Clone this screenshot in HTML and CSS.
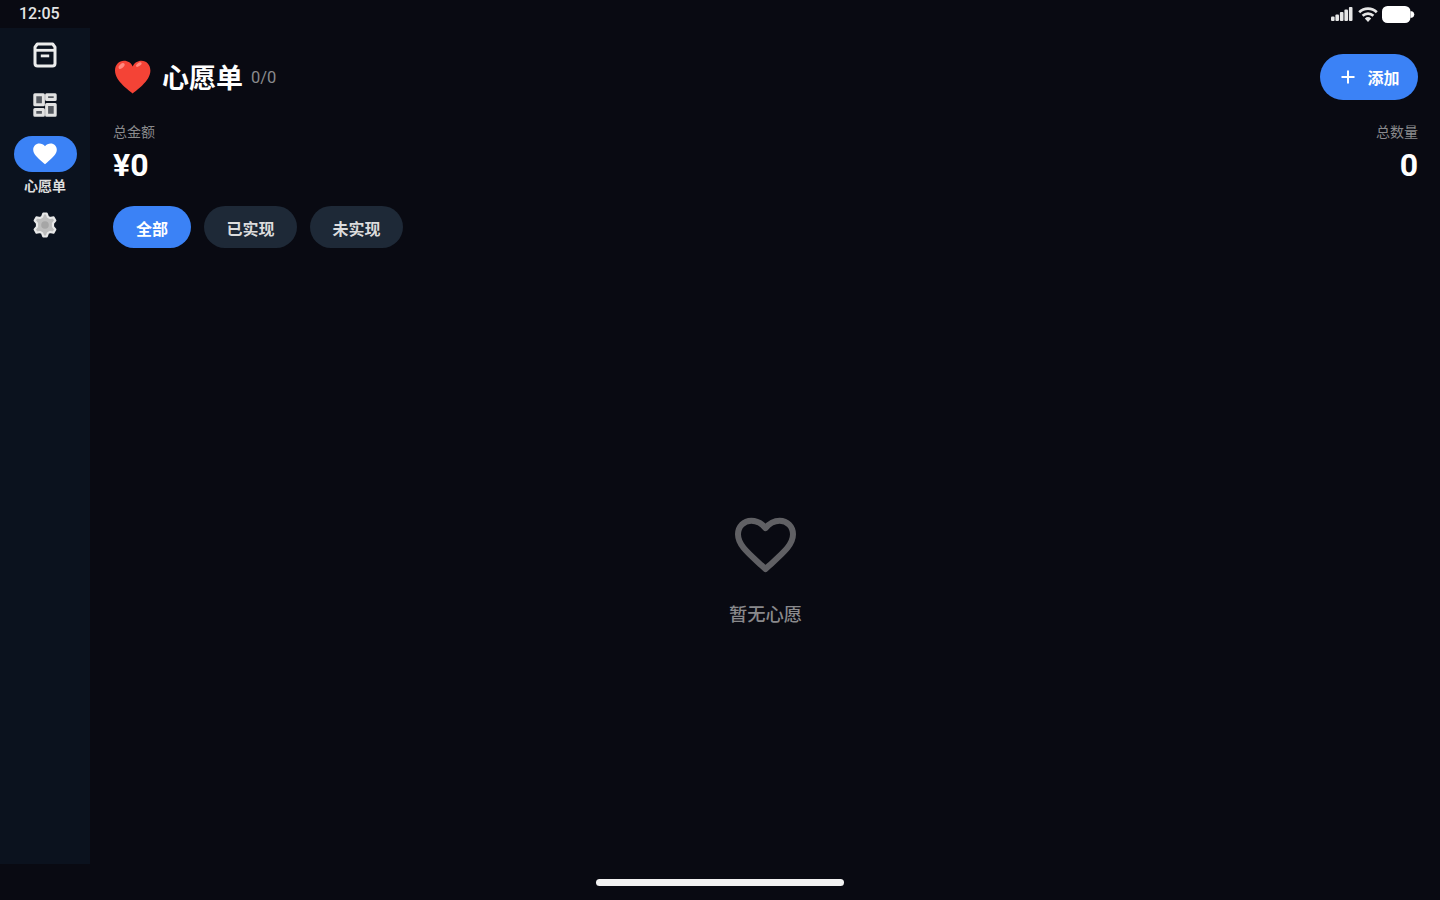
FILE: index.html
```html
<!DOCTYPE html>
<html lang="zh-Hans">
<head>
  <meta charset="UTF-8">
  <title>心愿单</title>
  <link rel="stylesheet" href="styles.css">
</head>
<body>
  <header class="status-bar">
    <span class="clock">12:05</span>
    <div class="status-icons">
      <svg width="22" height="14" viewBox="0 0 22 14" fill="#e6e6e6">
        <rect x="0" y="9.5" width="3.6" height="4.5" rx="1"/>
        <rect x="4.4" y="7.5" width="3.6" height="6.5" rx="1"/>
        <rect x="8.900" y="5" width="3.6" height="9" rx="1"/>
        <rect x="13.4" y="2.5" width="3.6" height="11.5" rx="1"/>
        <rect x="17.900" y="0" width="3.6" height="14" rx="1"/>
      </svg>
      <svg class="wifi" width="20" height="15" viewBox="0 0 20 15" fill="none" stroke="#e6e6e6" stroke-width="2.7">
        <path d="M1.2 5.2C6.2.3 13.8.3 18.8 5.2"/>
        <path d="M4.6 8.8C7.7 5.9 12.3 5.9 15.4 8.8"/>
        <path d="M10 15 6.8 11.6a4.7 4.7 0 0 1 6.4 0z" fill="#e6e6e6" stroke="none"/>
      </svg>
      <svg class="battery" width="33" height="17" viewBox="0 0 33 17" fill="#fff">
        <rect width="28.5" height="17" rx="5.5"/>
        <path d="M28.5 5.2h1.6q2.2 1 2.2 3.3t-2.2 3.3h-1.6z"/>
      </svg>
    </div>
  </header>

  <div class="app">
    <nav class="sidebar">
      <a class="nav-item">
        <svg width="24" height="26" viewBox="0 0 24 26" fill="none" stroke="#ececec" stroke-width="3" stroke-linejoin="round">
          <path d="M4.300 2h15.400l2.300 3.200v16.300a2.600 2.600 0 0 1-2.600 2.600H4.600A2.600 2.600 0 0 1 2 21.500V5.200z"/>
          <path d="M2 8.300h20" stroke-width="2.800"/>
          <path d="M7.800 13.900h8.400" stroke-width="2.800"/>
        </svg>
      </a>
      <a class="nav-item">
        <svg width="24" height="24" viewBox="0 0 24 24" fill="#555960" stroke="#e2e2e2" stroke-width="3" stroke-linejoin="round">
          <rect x="1.800" y="1.800" width="8.600" height="10" />
          <rect x="13.600" y="1.800" width="8.600" height="4.800"/>
          <rect x="1.800" y="16.600" width="8.600" height="5.600"/>
          <rect x="13.600" y="11.600" width="8.600" height="10.600"/>
        </svg>
      </a>
      <a class="nav-item active">
        <span class="nav-pill">
          <svg width="24" height="22" viewBox="0 0 24 22" fill="#fff">
            <path d="M12 21.300 10.200 19.700C4 14.100.2 10.800.2 6.700.2 3.200 2.900.6 6.400.6c2.100 0 4.300 1 5.600 2.700C13.300 1.600 15.500.6 17.600.6c3.500 0 6.200 2.600 6.200 6.100 0 4.100-3.800 7.400-10 13z"/>
          </svg>
        </span>
        <span class="nav-label">心愿单</span>
      </a>
      <a class="nav-item">
        <svg width="24" height="26" viewBox="0 0 24 26">
          <path d="M10.300 1.500h3.400l1.200 3.400 2 1.100 3.600-.6 1.800 3.100L20 11.400v3.200l2.300 2.900-1.800 3.100-3.600-.6-2 1.100-1.200 3.400h-3.400l-1.200-3.400-2-1.100-3.600.6-1.800-3.100L4 14.600v-3.200L1.700 8.500l1.800-3.100 3.600.6 2-1.100z" fill="#bdbdbd" stroke="#e8e8e8" stroke-width="2.200" stroke-linejoin="round"/>
          <circle cx="12" cy="13" r="3.800" fill="#a6a6a6"/>
        </svg>
      </a>
    </nav>

    <main class="content">
      <div class="title-row">
        <svg class="title-heart" width="38" height="34" viewBox="0 0 38 34">
          <path d="M18.700 33.500C16.200 31 1 21.500 1 10.500 1 4.800 5 .8 10 .8c4 0 7.200 2.200 8.700 5.700C20.200 3 23.500.8 27.500.8c5 0 8.900 4 8.900 9.700 0 11-15.200 20.500-17.700 23z" fill="#f44336"/>
          <ellipse cx="7.600" cy="6" rx="3.600" ry="2" transform="rotate(-42 7.600 6)" fill="#ff8a80"/>
          <ellipse cx="24.800" cy="4.600" rx="3.200" ry="1.500" transform="rotate(-35 24.800 4.600)" fill="#ff8a80"/>
        </svg>
        <h1>心愿单</h1>
        <span class="progress">0/0</span>
        <button class="add-button">
          <svg width="14" height="14" viewBox="0 0 14 14" stroke="#fff" stroke-width="2"><path d="M7 .5v13M.5 7h13"/></svg>
          添加
        </button>
      </div>

      <div class="summary">
        <div class="stat">
          <div class="stat-label">总金额</div>
          <div class="stat-value">¥0</div>
        </div>
        <div class="stat right">
          <div class="stat-label">总数量</div>
          <div class="stat-value">0</div>
        </div>
      </div>

      <div class="filters">
        <button class="chip selected">全部</button>
        <button class="chip">已实现</button>
        <button class="chip">未实现</button>
      </div>

      <div class="empty">
        <svg width="62" height="56" viewBox="0 0 62 56" fill="none" stroke="#606064" stroke-width="6" stroke-linejoin="round">
          <path d="M30.500 52 27 48.800C13 36 3 28 3 17.300 3 9.500 8.800 3.700 16.300 3.700c5.500 0 10.700 3 14.200 7.500 3.500-4.500 8.700-7.500 14.200-7.500 7.500 0 13.300 5.800 13.300 13.600C58 28 48 36 34 48.800z"/>
        </svg>
        <p>暂无心愿</p>
      </div>
    </main>
  </div>

  <footer class="home-area"><div class="home-indicator"></div></footer>
</body>
</html>
```
FILE: styles.css
```css
* {
  box-sizing: border-box;
}
body {
  margin: 0;
  height: 900px;
  display: flex;
  flex-direction: column;
  overflow: hidden;
  background-color: #090a12;
  color: #fff;
  font-family: Roboto, "Noto Sans CJK SC", sans-serif;
}
svg {
  display: block;
  flex: none;
}
button {
  border: 0;
  color: #fff;
  font-family: inherit;
  font-weight: bold;
}

/* status bar */
.status-bar {
  height: 28px;
  padding: 0 25px 1px 19px;
  display: flex;
  align-items: center;
  justify-content: space-between;
}
.clock {
  font-size: 16px;
  font-weight: 500;
  color: #e4e4e4;
}
.status-icons {
  padding-top: 1px;
  display: flex;
  align-items: center;
}
.wifi { margin-left: 5px; }
.battery { margin-left: 4px; }

/* sidebar */
.app {
  flex: 1;
  display: flex;
}
.sidebar {
  width: 90px;
  padding-top: 14px;
  display: flex;
  flex-direction: column;
  align-items: center;
  gap: 25px;
  background-color: #0b121e;
}
.nav-item.active {
  margin-top: -6px;
  margin-bottom: -9px;
}
.nav-pill {
  width: 63px;
  height: 36px;
  display: flex;
  align-items: center;
  justify-content: center;
  border-radius: 18px;
  background-color: #3b82f6;
}
.nav-label {
  display: block;
  margin-top: 4px;
  line-height: 20px;
  font-size: 14px;
  font-weight: bold;
  text-align: center;
  color: #dedede;
}

/* content */
.content {
  flex: 1;
  padding: 26px 22px 0 23px;
  display: flex;
  flex-direction: column;
}
.title-row {
  height: 46px;
  display: flex;
  align-items: center;
}
.title-heart { margin-left: 1px; }
h1 {
  margin: 0 0 0 10px;
  padding-top: 4px;
  font-size: 27px;
  line-height: 46px;
}
.progress {
  margin-left: 8px;
  font-size: 16.5px;
  color: #8a8a8d;
}
.add-button {
  width: 98px;
  height: 46px;
  margin-left: auto;
  padding: 0 2px 0 5px;
  display: flex;
  align-items: center;
  justify-content: center;
  gap: 12px;
  border-radius: 23px;
  background-color: #3b82f6;
  font-size: 16px;
}
.summary {
  margin-top: 22px;
  display: flex;
  justify-content: space-between;
}
.stat.right { text-align: right; }
.stat-label {
  font-size: 14px;
  line-height: 20px;
  color: #8a8a8d;
}
.stat-value {
  margin-top: 4px;
  font-size: 32px;
  line-height: 38px;
  font-weight: bold;
}
.filters {
  margin-top: 22px;
  display: flex;
  gap: 13px;
}
.chip {
  width: 93px;
  height: 42px;
  padding: 1px 0 0;
  border-radius: 21px;
  background-color: #1e2937;
  color: #dcdcdd;
  font-size: 16px;
}
.chip.selected {
  width: 78px;
  background-color: #3b82f6;
  color: #fff;
}
.empty {
  flex: 1;
  padding-top: 269px;
  display: flex;
  flex-direction: column;
  align-items: center;
}
.empty p {
  margin: 28px 0 0;
  font-size: 18.3px;
  line-height: 28px;
  font-weight: 500;
  color: #89898c;
}

.home-area {
  height: 36px;
  display: flex;
  justify-content: center;
  padding-top: 15px;
}
.home-indicator {
  width: 248px;
  height: 7px;
  border-radius: 4px;
  background-color: #f2f2f2;
}
```
